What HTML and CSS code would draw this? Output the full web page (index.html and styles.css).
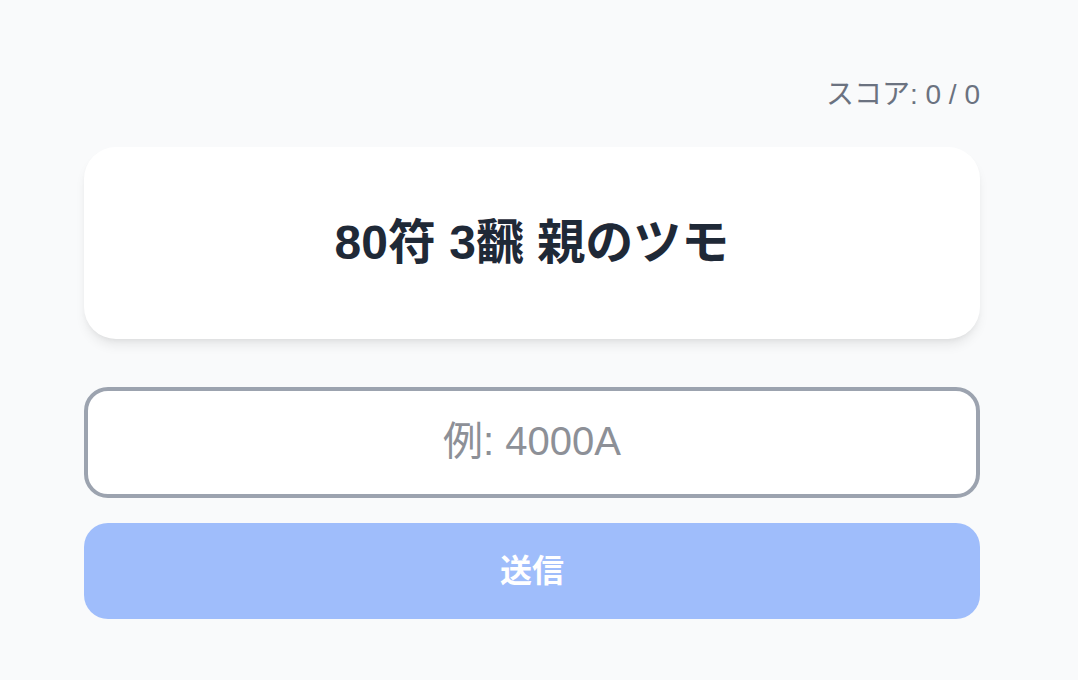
FILE: index.html
```html
<!DOCTYPE html>
<html lang="ja">
<head>
<meta charset="utf-8">
<title>符計算クイズ</title>
<link rel="stylesheet" href="styles.css">
</head>
<body>
<main class="quiz">
  <div class="score">スコア: 0 / 0</div>
  <section class="card">
    <h1 class="question">80符 3飜 親のツモ</h1>
  </section>
  <form class="answer-form" onsubmit="return false;">
    <input class="answer-input" type="text" placeholder="例: 4000A">
    <button class="submit" type="submit" disabled>送信</button>
  </form>
</main>
</body>
</html>
```

FILE: styles.css
```css
* { box-sizing: border-box; }

html, body {
  margin: 0;
  padding: 0;
  background: #f9fafb;
}

body {
  font-family: "Liberation Sans", "Noto Sans CJK JP", sans-serif;
  color: #1f2937;
}

.quiz {
  width: 896px;
  margin-left: 84px;
  padding-top: 75px;
  display: flex;
  flex-direction: column;
}

.score {
  text-align: right;
  font-size: 28px;
  line-height: 40px;
  color: #6b7280;
  margin-bottom: 32px;
}

.card {
  background: #ffffff;
  border-radius: 32px;
  padding: 64px 32px;
  box-shadow: 0 8px 12px -2px rgba(0, 0, 0, 0.08), 0 3px 6px -3px rgba(0, 0, 0, 0.08);
  margin-bottom: 48px;
}

.question {
  margin: 0;
  text-align: center;
  font-size: 48px;
  line-height: 64px;
  font-weight: 700;
  color: #1f2937;
}

.answer-form {
  display: flex;
  flex-direction: column;
  gap: 25px;
}

.answer-input {
  width: 100%;
  height: 111px;
  border: 4px solid #9ca3af;
  border-radius: 24px;
  background: #ffffff;
  font-family: inherit;
  font-size: 40px;
  text-align: center;
  color: #1f2937;
  outline: none;
  padding: 0 32px 2px;
}

.answer-input::placeholder {
  color: #8d9097;
}

.submit {
  width: 100%;
  height: 96px;
  border: none;
  border-radius: 24px;
  background: #9fbdfb;
  color: #ffffff;
  font-family: inherit;
  font-size: 32px;
  font-weight: 700;
  padding: 0 0 6px;
  cursor: not-allowed;
}
```
